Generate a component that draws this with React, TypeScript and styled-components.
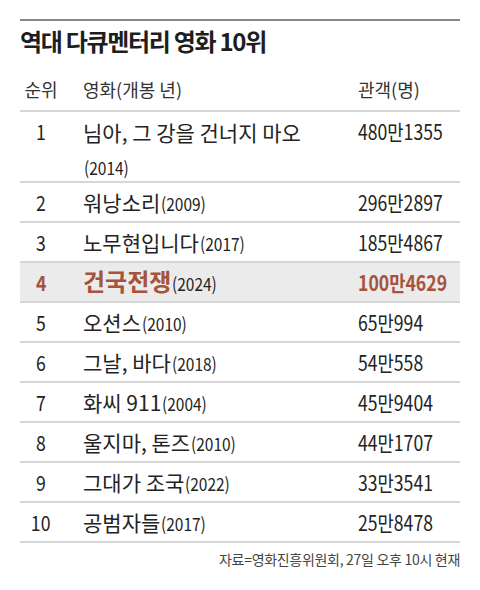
import React from 'react'
import styled, { createGlobalStyle } from 'styled-components'

const rows = [
  { rank: 1, title: '님아, 그 강을 건너지 마오', year: 2014, count: '480만1355', wrap: true },
  { rank: 2, title: '워낭소리', year: 2009, count: '296만2897' },
  { rank: 3, title: '노무현입니다', year: 2017, count: '185만4867' },
  { rank: 4, title: '건국전쟁', year: 2024, count: '100만4629', hot: true },
  { rank: 5, title: '오션스', year: 2010, count: '65만994' },
  { rank: 6, title: '그날, 바다', year: 2018, count: '54만558' },
  { rank: 7, title: '화씨 911', year: 2004, count: '45만9404' },
  { rank: 8, title: '울지마, 톤즈', year: 2010, count: '44만1707' },
  { rank: 9, title: '그대가 조국', year: 2022, count: '33만3541' },
  { rank: 10, title: '공범자들', year: 2017, count: '25만8478' },
]

export default function App() {
  return <>
    <Global />
    <Page>
      <TopRule />
      <Title>역대 다큐멘터리 영화 10위</Title>
      <HeadRow>
        <HeadCell>순위</HeadCell>
        <HeadCell>영화(개봉 년)</HeadCell>
        <HeadCell>관객(명)</HeadCell>
      </HeadRow>
      {rows.map(r => (
        <Row key={r.rank} hot={!!r.hot} tall={!!r.wrap}>
          <Rank><Narrow>{r.rank}</Narrow></Rank>
          <Movie>
            <Name hot={!!r.hot}>{r.title}</Name>
            {r.wrap && <br />}
            <Year>({r.year})</Year>
          </Movie>
          <Count><Narrow>{r.count}</Narrow></Count>
        </Row>
      ))}
      <Source>자료=영화진흥위원회, 27일 오후 10시 현재</Source>
    </Page>
  </>
}

const Global = createGlobalStyle`
  *{ box-sizing:border-box; }
  body{
    margin:0;
    background:#fff;
    font-family:"Noto Sans CJK KR",sans-serif;
    color:#232323;
  }
`
const Page = styled.div`
  width:480px;
  padding:19px 20px 0;
`
const TopRule = styled.div`
  height:2px;
  background:#8d8884;
`
const Title = styled.h1`
  margin:0;
  height:49px;
  padding-top:3px;
  line-height:34px;
  font-size:24px;
  font-weight:700;
  letter-spacing:-1.3px;
  color:#1e1e1e;
`
const Grid = styled.div`
  display:grid;
  grid-template-columns:42px 1fr 102px;
  column-gap:21px;
  border-bottom:2px solid #d6d6d6;
`
const HeadRow = styled(Grid)`
  height:42px;
  align-items:center;
  padding-bottom:2px;
  font-size:18px;
  color:#333;
`
const HeadCell = styled.div`
  &:first-child{ text-align:center; }
`
interface RowProps {
  hot: boolean;
  tall: boolean;
}
const Row = styled(Grid)<RowProps>`
  height:${p => p.tall ? 71 : 40}px;
  align-items:${p => p.tall ? 'start' : 'center'};
  padding-top:${p => p.tall ? 3 : 0}px;
  font-size:21px;
  background:${p => p.hot ? '#ebebeb' : 'transparent'};
  color:${p => p.hot ? '#a5533a' : '#232323'};
  font-weight:${p => p.hot ? 700 : 400};
`
const Narrow = styled.span`
  display:inline-block;
  transform:scaleX(0.84);
  white-space:nowrap;
`
const Rank = styled.div`
  text-align:center;
  line-height:32px;
  & > span{ transform-origin:center; }
`
const Count = styled.div`
  line-height:32px;
  & > span{ transform-origin:left center; }
`
const Movie = styled.div`
  line-height:34px;
`
interface NameProps {
  hot: boolean;
}
const Name = styled.span<NameProps>`
  font-size:${p => p.hot ? 24 : 21}px;
  letter-spacing:${p => p.hot ? 0 : 0}px;
`
const Year = styled.span`
  display:inline-block;
  font-size:18px;
  font-weight:400;
  color:#232323;
  transform:scaleX(0.86);
  transform-origin:left center;
  margin-left:1px;
`
const Source = styled.div`
  text-align:right;
  padding-top:6px;
  font-size:14px;
  letter-spacing:-0.3px;
  color:#444;
`
